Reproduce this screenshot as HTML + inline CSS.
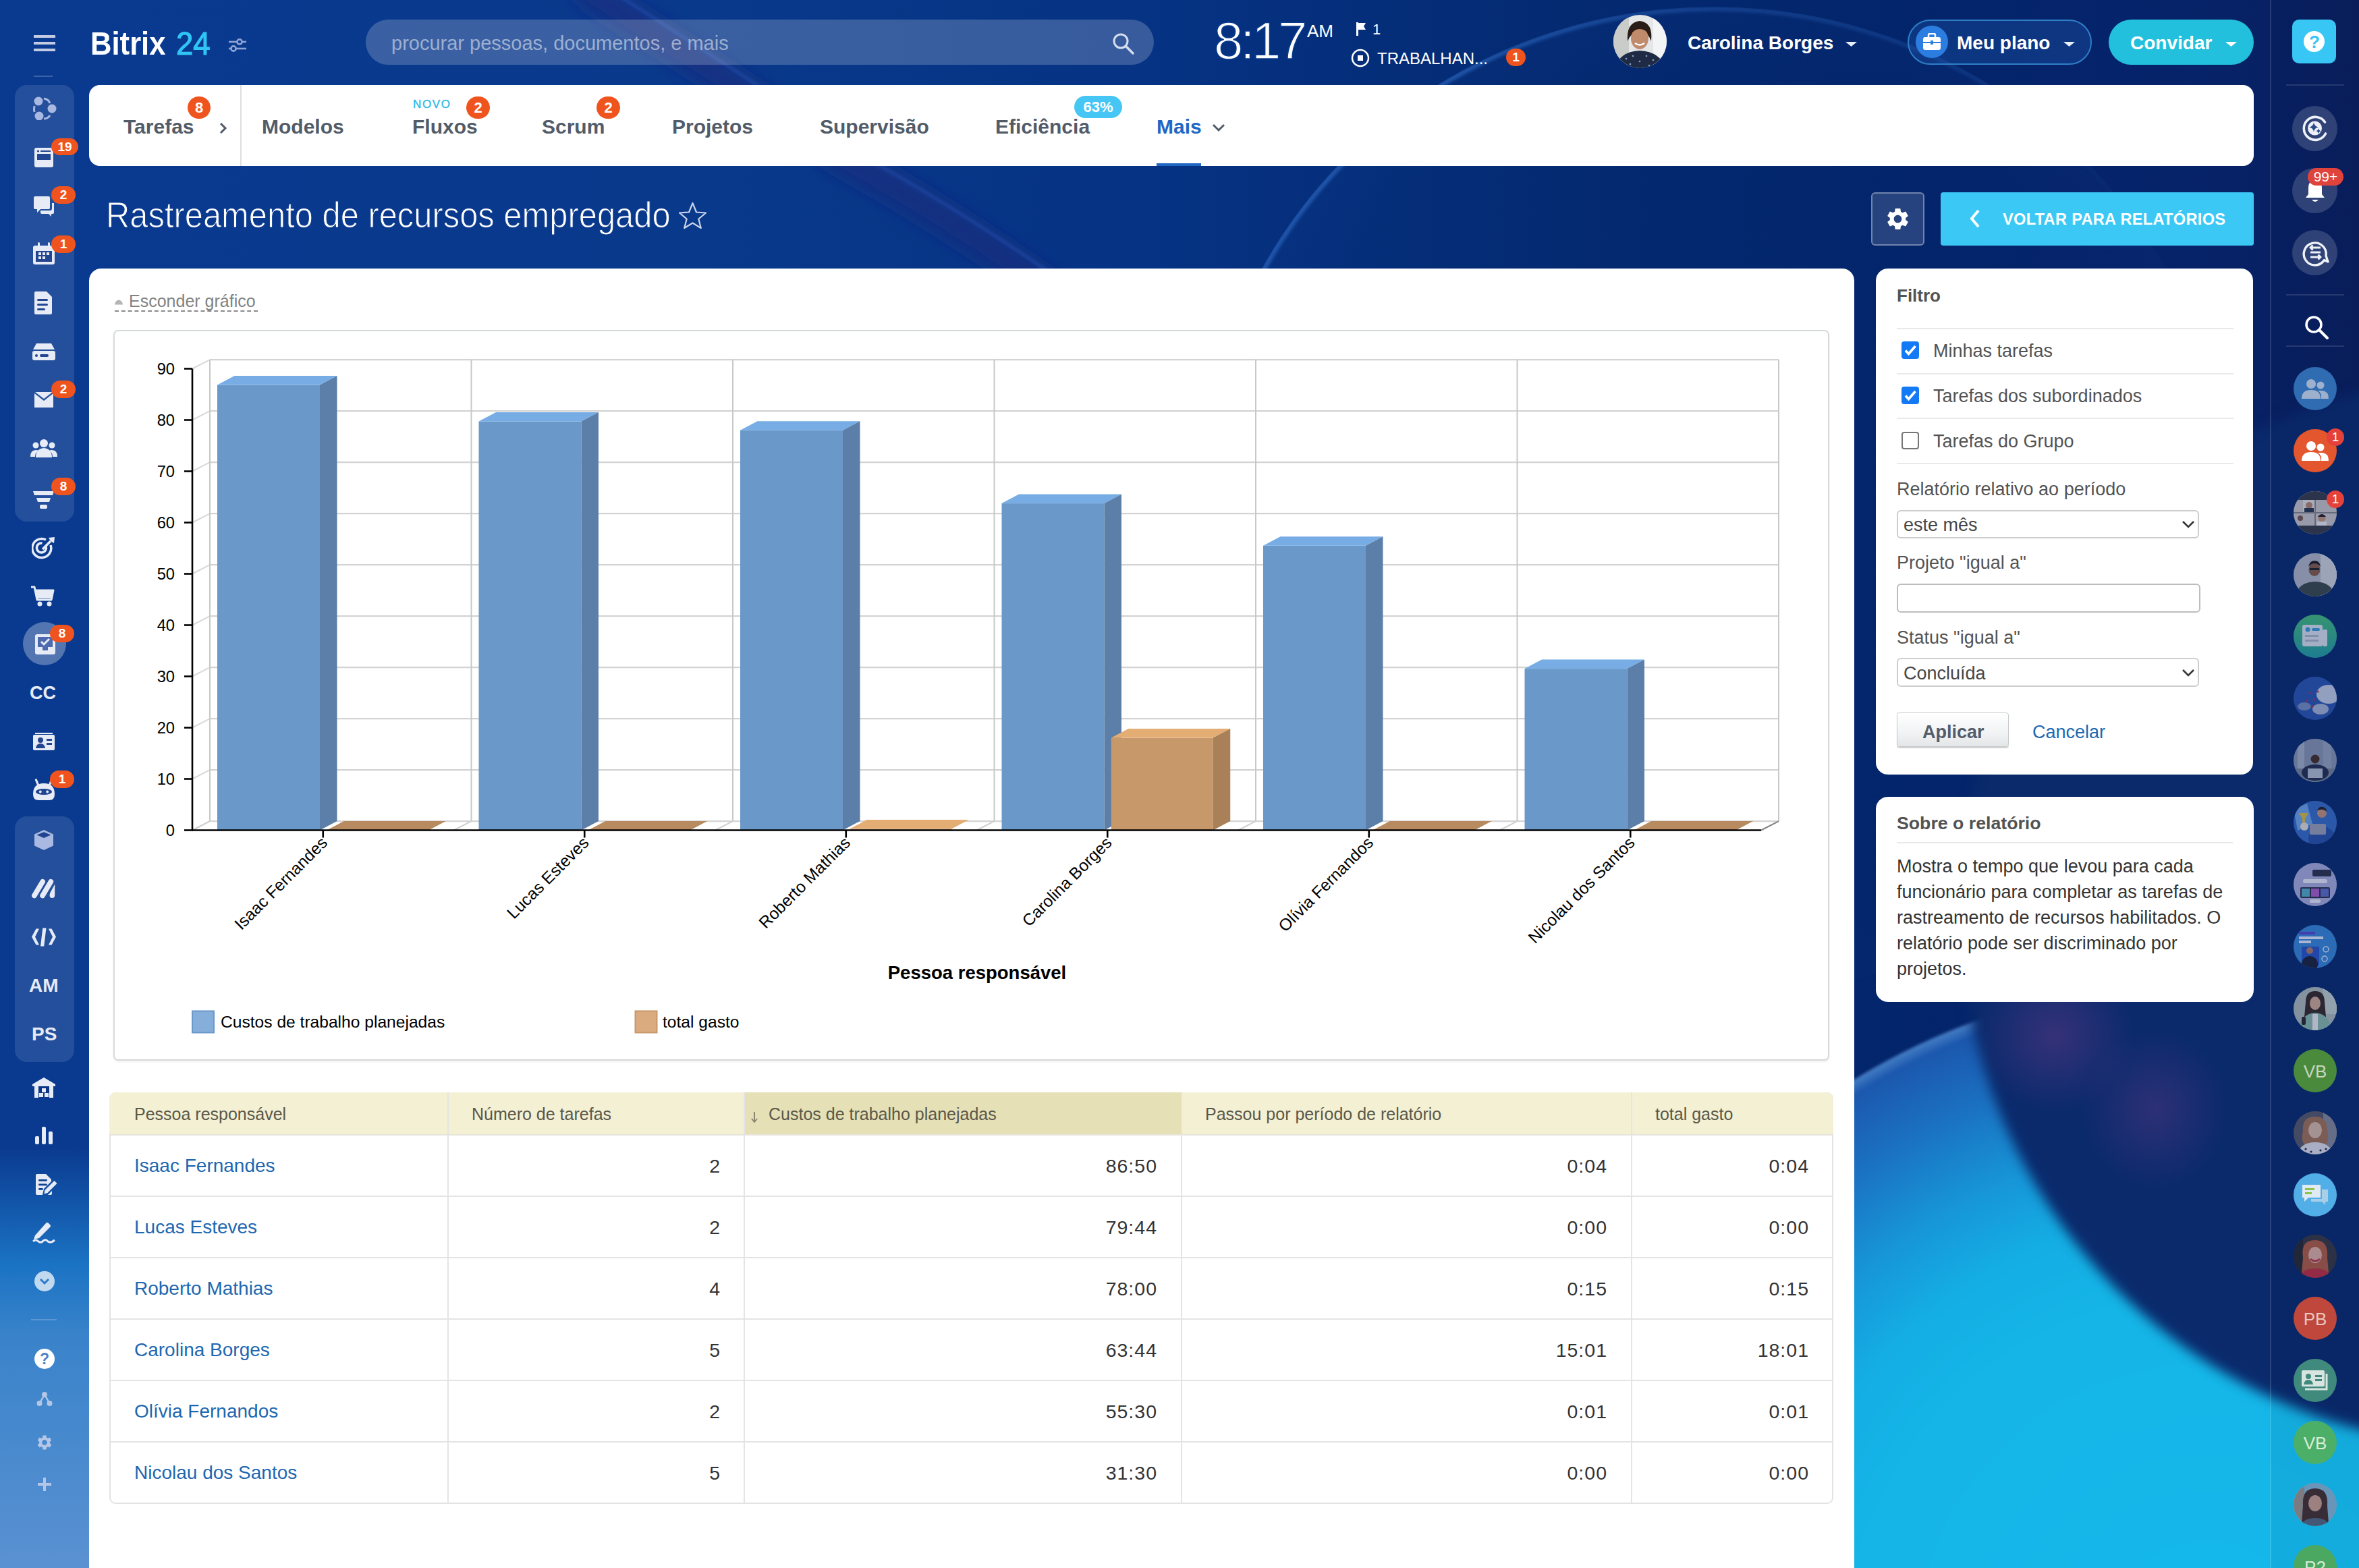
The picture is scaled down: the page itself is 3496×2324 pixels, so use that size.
<!DOCTYPE html>
<html><head><meta charset="utf-8">
<style>
html,body{margin:0;padding:0;width:3496px;height:2324px;overflow:hidden;}
body{position:relative;font-family:"Liberation Sans",sans-serif;background:#0a2d7e;}
.a{position:absolute;}
.bg{position:absolute;left:0;top:0;width:3496px;height:2324px;overflow:hidden;
 background:linear-gradient(90deg,#0a3a90 0%,#09398b 30%,#063384 48%,#042a72 66%,#03256b 80%,#06236a 92%,#0a1f5e 100%);}
.t{position:absolute;white-space:nowrap;line-height:1;}
.badge{position:absolute;background:#f0541e;color:#fff;font-weight:bold;border-radius:20px;text-align:center;}
.card{position:absolute;background:#fff;border-radius:18px;}
</style></head><body>
<div class="bg">
<svg class="a" style="left:0;top:0" width="3496" height="700" viewBox="0 0 3496 700"><defs><filter id="bl1" x="-20%" y="-20%" width="140%" height="140%"><feGaussianBlur stdDeviation="14"/></filter><filter id="bl2"><feGaussianBlur stdDeviation="2.5"/></filter></defs><path d="M860 -20 Q1050 100 1250 235 Q1420 330 1600 460" stroke="rgba(40,30,120,0.45)" stroke-width="44" fill="none" filter="url(#bl1)"/><path d="M895 -20 Q1085 100 1285 235 Q1455 330 1635 460" stroke="rgba(70,120,220,0.35)" stroke-width="4" fill="none" filter="url(#bl2)"/></svg>
<div class="a" style="left:1780px;top:10px;width:1520px;height:1470px;-webkit-mask-image:linear-gradient(90deg,#000 0%,#000 25%,rgba(0,0,0,0.55) 50%,rgba(0,0,0,0.35) 75%,transparent 92%)"><div class="a" style="left:0;top:0;width:1520px;height:1470px;border-radius:50%;box-sizing:border-box;border:6px solid rgba(70,140,235,0.5);filter:blur(2.5px);-webkit-mask-image:linear-gradient(180deg,#000 0%,#000 28%,transparent 42%)"></div></div>
<div class="a" style="left:1780px;top:10px;width:1520px;height:1470px;border-radius:50%;background:radial-gradient(ellipse at 50% 50%,rgba(30,70,150,0) 60%,rgba(40,90,180,0.18) 100%)"></div>
<div class="a" style="left:2270px;top:1453px;width:2000px;height:2000px;border-radius:50%;background:radial-gradient(circle closest-side,#16b9ec 0%,#15b5e7 53%,#14aee4 65%,#1796d8 76%,#1b6fc0 89%,#1b58ae 98%,rgba(100,165,235,0.7) 100%);filter:blur(2px)"></div>
<div class="a" style="left:2905px;top:555px;width:1590px;height:1590px;border-radius:50%;background:#0a2a6c;filter:blur(9px)"></div>
<div class="a" style="left:2925px;top:1420px;width:240px;height:230px;border-radius:50%;background:radial-gradient(ellipse at center,rgba(120,60,140,0.4),rgba(120,60,140,0) 70%)"></div>
<div class="a" style="left:3083px;top:1524px;width:220px;height:240px;border-radius:50%;background:radial-gradient(ellipse at center,rgba(120,60,140,0.32),rgba(120,60,140,0) 70%)"></div>
</div>

<!-- HEADER -->
<div id="header">
<div class="a" style="left:50px;top:52px;width:32px;height:4px;background:#c3cbe3"></div>
<div class="a" style="left:50px;top:62px;width:32px;height:4px;background:#c3cbe3"></div>
<div class="a" style="left:50px;top:72px;width:32px;height:4px;background:#c3cbe3"></div>
<div class="t" style="left:134px;top:39.5px;font-size:49px;font-weight:bold;color:#fff;transform:scaleX(0.89);transform-origin:0 0">Bitrix</div><div class="t" style="left:261px;top:39.5px;font-size:49px;color:#2fc6f6;transform:scaleX(0.93);transform-origin:0 0;-webkit-text-stroke:1.2px #2fc6f6">24</div>
<svg class="a" style="left:338px;top:54px" width="28" height="26" viewBox="0 0 28 26"><g stroke="#8ea3d3" stroke-width="2.6" fill="none"><line x1="1" y1="8" x2="27" y2="8"/><line x1="1" y1="18" x2="27" y2="18"/><circle cx="17" cy="8" r="3.6" fill="#0a3a90"/><circle cx="8" cy="18" r="3.6" fill="#0a3a90"/></g></svg>
<div class="a" style="left:542px;top:29px;width:1168px;height:67px;border-radius:34px;background:rgba(255,255,255,0.2)"></div>
<div class="t" style="left:580px;top:50px;font-size:29px;color:rgba(255,255,255,0.5)">procurar pessoas, documentos, e mais</div>
<svg class="a" style="left:1648px;top:48px" width="34" height="34" viewBox="0 0 34 34"><circle cx="13" cy="13" r="10" stroke="#d5deee" stroke-width="3" fill="none"/><line x1="20.5" y1="20.5" x2="31" y2="31" stroke="#d5deee" stroke-width="3.5" stroke-linecap="round"/></svg>
<div class="t" style="left:1799px;top:21px;font-size:78px;color:#fff;letter-spacing:-4.5px;-webkit-text-stroke:1.6px #083a8b">8:17</div>
<div class="t" style="left:1937px;top:33px;font-size:26px;color:#fff">AM</div>
<svg class="a" style="left:2008px;top:32px" width="22" height="22" viewBox="0 0 22 22"><rect x="2" y="1" width="3" height="20" fill="#fff"/><path d="M5 2 H16 L13 7 L16 12 H5 Z" fill="#fff"/></svg>
<div class="t" style="left:2034px;top:33px;font-size:22px;color:#fff">1</div>
<svg class="a" style="left:2001px;top:71px" width="30" height="30" viewBox="0 0 30 30"><circle cx="15" cy="15" r="12" stroke="#fff" stroke-width="2.5" fill="none"/><rect x="11" y="11" width="8" height="8" fill="#fff"/></svg>
<div class="t" style="left:2041px;top:75px;font-size:24px;color:#fff">TRABALHAN...</div>
<div class="badge" style="left:2232px;top:72px;width:29px;height:26px;line-height:26px;font-size:19px">1</div>
<svg class="a" style="left:2390px;top:21px" width="81" height="81" viewBox="0 0 81 81"><defs><clipPath id="avc"><circle cx="40.5" cy="40.5" r="39.5"/></clipPath></defs><g clip-path="url(#avc)"><rect width="81" height="81" fill="#e4e6e8"/><rect x="0" y="0" width="24" height="81" fill="#c9ccc8"/><rect x="60" y="0" width="21" height="81" fill="#f2f4f6"/><path d="M22 40 Q20 12 40 10 Q60 12 57 40 Q52 26 40 24 Q28 26 22 40Z" fill="#2a1c16"/><ellipse cx="40" cy="36" rx="13" ry="16" fill="#c08a6c"/><path d="M27 30 Q30 18 40 18 Q52 18 54 30 Q48 22 40 22 Q32 22 27 30Z" fill="#2a1c16"/><path d="M33 43 Q40 48 47 43" stroke="#fff" stroke-width="2.5" fill="none"/><path d="M4 81 Q8 56 40 54 Q72 56 78 81Z" fill="#1f2b45"/><g fill="#8aa0c8"><circle cx="20" cy="66" r="1.3"/><circle cx="30" cy="62" r="1.3"/><circle cx="50" cy="62" r="1.3"/><circle cx="60" cy="68" r="1.3"/><circle cx="26" cy="74" r="1.3"/><circle cx="40" cy="70" r="1.3"/><circle cx="54" cy="76" r="1.3"/></g></g></svg>
<div class="t" style="left:2501px;top:50px;font-size:28px;font-weight:bold;color:#fff">Carolina Borges</div>
<svg class="a" style="left:2734px;top:61px" width="19" height="9" viewBox="0 0 19 9"><path d="M1 1 H18 L9.5 8 Z" fill="#e8eef8"/></svg>
<div class="a" style="left:2827px;top:29px;width:269px;height:63px;border-radius:34px;border:2px solid #2f7fc7;background:rgba(40,100,190,0.28)"></div>
<div class="a" style="left:2839px;top:38px;width:48px;height:48px;border-radius:24px;background:#2b7de0"></div>
<svg class="a" style="left:2849px;top:49px" width="28" height="26" viewBox="0 0 28 26"><rect x="1" y="6" width="26" height="19" rx="3" fill="#fff"/><path d="M9 6 V3 Q9 1 11 1 H17 Q19 1 19 3 V6" stroke="#fff" stroke-width="2.5" fill="none"/><rect x="1" y="13" width="26" height="2" fill="#2b7de0"/><rect x="12" y="11" width="4" height="6" fill="#2b7de0"/></svg>
<div class="t" style="left:2900px;top:50px;font-size:28px;font-weight:bold;color:#fff">Meu plano</div>
<svg class="a" style="left:3057px;top:61px" width="19" height="9" viewBox="0 0 19 9"><path d="M1 1 H18 L9.5 8 Z" fill="#e8eef8"/></svg>
<div class="a" style="left:3125px;top:29px;width:215px;height:67px;border-radius:34px;background:#22c0dc"></div>
<div class="t" style="left:3157px;top:50px;font-size:28px;font-weight:bold;color:#fff">Convidar</div>
<svg class="a" style="left:3297px;top:61px" width="19" height="9" viewBox="0 0 19 9"><path d="M1 1 H18 L9.5 8 Z" fill="#fff"/></svg>
</div>

<!-- LEFT SIDEBAR -->
<div id="lsb">
<div class="a" style="left:0;top:1700px;width:132px;height:624px;background:linear-gradient(180deg,rgba(40,120,200,0) 0%,rgba(30,125,205,0.85) 28%,rgba(60,135,205,0.95) 45%,rgba(90,145,210,1) 100%)"></div>
<div class="a" style="left:50px;top:112px;width:28px;height:2px;background:rgba(255,255,255,0.2)"></div>
<div class="a" style="left:22px;top:126px;width:88px;height:647px;border-radius:18px;background:rgba(255,255,255,0.11)"></div>
<div class="a" style="left:22px;top:1210px;width:88px;height:364px;border-radius:18px;background:rgba(255,255,255,0.11)"></div>
<svg class="a" style="left:48px;top:142px" width="36" height="36" viewBox="0 0 36 36"><g fill="#aab9e2"><circle cx="9" cy="8" r="6.5"/><circle cx="29" cy="19" r="6.5"/><circle cx="10" cy="30" r="6.5"/><path d="M3 15 Q2 20 3 24" stroke="#aab9e2" stroke-width="3" fill="none"/><path d="M17 34 Q23 34 26 29" stroke="#aab9e2" stroke-width="3" fill="none"/><path d="M17 4 Q24 5 26 11" stroke="#aab9e2" stroke-width="3" fill="none"/></g></svg>
<svg class="a" style="left:50px;top:218px" width="30" height="30" viewBox="0 0 30 30"><rect x="1" y="1" width="28" height="29" rx="3" fill="#e6ebf6"/><rect x="5" y="10" width="20" height="9" fill="#24458f"/><circle cx="6.5" cy="6" r="1.6" fill="#24458f"/><rect x="10" y="5" width="15" height="2" fill="#24458f"/></svg>
<div class="badge" style="left:76px;top:205px;width:40px;height:25px;line-height:25px;font-size:19px;border-radius:13px">19</div>
<svg class="a" style="left:48px;top:290px" width="34" height="34" viewBox="0 0 34 34"><path d="M2 3 Q2 1 4 1 H24 Q26 1 26 3 V18 Q26 20 24 20 H12 L7 25 V20 H4 Q2 20 2 18 Z" fill="#e6ebf6"/><path d="M29 11 H32 V25 Q32 27 30 27 H28 V31 L24 27 H14 Q12 27 12 25 V22 H26 Q29 22 29 19 Z" fill="#e6ebf6"/></svg>
<div class="badge" style="left:76px;top:276px;width:36px;height:26px;line-height:26px;font-size:19px;border-radius:13px">2</div>
<svg class="a" style="left:48px;top:358px" width="34" height="36" viewBox="0 0 34 36"><rect x="1" y="6" width="32" height="28" rx="3" fill="#e6ebf6"/><rect x="5" y="14" width="24" height="16" fill="#24458f"/><rect x="8" y="1" width="3" height="8" rx="1.5" fill="#e6ebf6"/><rect x="23" y="1" width="3" height="8" rx="1.5" fill="#e6ebf6"/><g fill="#e6ebf6"><rect x="9" y="16" width="4" height="4"/><rect x="15" y="16" width="4" height="4"/><rect x="21" y="16" width="4" height="4"/><rect x="9" y="22" width="4" height="4"/><rect x="15" y="22" width="4" height="4"/></g></svg>
<div class="badge" style="left:76px;top:349px;width:36px;height:26px;line-height:26px;font-size:19px;border-radius:13px">1</div>
<svg class="a" style="left:50px;top:431px" width="28" height="36" viewBox="0 0 28 36"><path d="M1 3 Q1 1 3 1 H19 L27 9 V33 Q27 35 25 35 H3 Q1 35 1 33 Z" fill="#e6ebf6"/><rect x="5" y="12" width="16" height="3" rx="1.5" fill="#24458f"/><rect x="5" y="19" width="16" height="3" rx="1.5" fill="#24458f"/><rect x="5" y="26" width="12" height="3" rx="1.5" fill="#24458f"/></svg>
<svg class="a" style="left:47px;top:508px" width="36" height="27" viewBox="0 0 36 27"><path d="M7 1 H29 L34 10 H2 Z" fill="#e6ebf6"/><rect x="1" y="12" width="34" height="14" rx="3" fill="#e6ebf6"/><circle cx="7" cy="19" r="2" fill="#24458f"/><rect x="12" y="17" width="13" height="4" rx="2" fill="#24458f"/></svg>
<svg class="a" style="left:50px;top:580px" width="30" height="25" viewBox="0 0 30 25"><path d="M1 3 L15 14 L29 3 V24 H1 Z" fill="#e6ebf6"/><path d="M2 1 H28 L15 11 Z" fill="#e6ebf6"/></svg>
<div class="badge" style="left:76px;top:564px;width:36px;height:26px;line-height:26px;font-size:19px;border-radius:13px">2</div>
<svg class="a" style="left:45px;top:650px" width="40" height="29" viewBox="0 0 40 29"><g fill="#e6ebf6"><circle cx="20" cy="7" r="6"/><path d="M8 28 Q8 15 20 14 Q32 15 32 28 Z"/><circle cx="8" cy="10" r="4.5"/><path d="M0 27 Q0 17 8 17 Q11 17 12 18 Q7 21 7 27 Z"/><circle cx="32" cy="10" r="4.5"/><path d="M40 27 Q40 17 32 17 Q29 17 28 18 Q33 21 33 27 Z"/></g></svg>
<svg class="a" style="left:48px;top:727px" width="33" height="28" viewBox="0 0 33 28"><g fill="#e6ebf6"><path d="M1 1 H32 L30 7 H3 Z"/><path d="M6 11 H27 L25 17 H8 Z"/><rect x="11" y="21" width="11" height="6" rx="2"/></g></svg>
<div class="badge" style="left:76px;top:708px;width:36px;height:26px;line-height:26px;font-size:19px;border-radius:13px">8</div>
<svg class="a" style="left:47px;top:795px" width="35" height="35" viewBox="0 0 35 35"><g fill="none" stroke="#e6ebf6" stroke-width="3.5"><path d="M28 13 A14 14 0 1 1 21 5"/><path d="M21 14.5 A7 7 0 1 1 15.5 10"/></g><line x1="16" y1="19" x2="28" y2="7" stroke="#e6ebf6" stroke-width="3.5"/><path d="M25 2 L34 1 L33 10 L28 7 Z" fill="#e6ebf6"/></svg>
<svg class="a" style="left:45px;top:868px" width="36" height="32" viewBox="0 0 36 32"><path d="M1 2 H6 L10 21 H31 L34 7 H8" stroke="#e6ebf6" stroke-width="3" fill="none" stroke-linejoin="round"/><path d="M8 7 H34 L31 19 H10 Z" fill="#e6ebf6"/><circle cx="14" cy="27" r="3.5" fill="#e6ebf6"/><circle cx="28" cy="27" r="3.5" fill="#e6ebf6"/></svg>
<div class="a" style="left:34px;top:922px;width:64px;height:64px;border-radius:32px;background:rgba(255,255,255,0.3)"></div>
<svg class="a" style="left:51px;top:939px" width="32" height="32" viewBox="0 0 32 32"><rect x="1" y="1" width="30" height="30" rx="3" fill="#e6ebf6"/><path d="M5 5 H27 V20 H20 V25 H12 V20 H5 Z" fill="#4e69ad"/><path d="M10 12 L14 16 L22 8" stroke="#e6ebf6" stroke-width="3" fill="none"/></svg>
<div class="badge" style="left:74px;top:926px;width:36px;height:26px;line-height:26px;font-size:19px;border-radius:13px">8</div>
<div class="t" style="left:44px;top:1014px;font-size:27px;font-weight:bold;color:#e6ebf6">CC</div>
<svg class="a" style="left:48px;top:1085px" width="34" height="28" viewBox="0 0 34 28"><rect x="1" y="4" width="32" height="23" rx="2" fill="#e6ebf6"/><rect x="4" y="1" width="26" height="2" fill="#e6ebf6"/><circle cx="12" cy="12" r="4" fill="#24458f"/><path d="M5 24 Q6 17 12 17 Q18 17 19 24 Z" fill="#24458f"/><rect x="21" y="10" width="8" height="3" fill="#24458f"/><rect x="21" y="16" width="8" height="3" fill="#24458f"/></svg>
<svg class="a" style="left:47px;top:1154px" width="36" height="34" viewBox="0 0 36 34"><path d="M2 23 Q2 7 18 7 Q34 7 34 23 Q34 32 26 32 H10 Q2 32 2 23Z" fill="#e6ebf6"/><ellipse cx="18" cy="19.5" rx="12" ry="4.6" fill="#1f4491"/><circle cx="12.8" cy="19.5" r="1.9" fill="#e6ebf6"/><circle cx="23.2" cy="19.5" r="1.9" fill="#e6ebf6"/><line x1="6.5" y1="2" x2="9" y2="8" stroke="#e6ebf6" stroke-width="3.2" stroke-linecap="round"/><line x1="29.5" y1="2" x2="27" y2="8" stroke="#e6ebf6" stroke-width="3.2" stroke-linecap="round"/></svg>
<div class="badge" style="left:74px;top:1142px;width:36px;height:26px;line-height:26px;font-size:19px;border-radius:13px">1</div>
<svg class="a" style="left:50px;top:1229px" width="30" height="32" viewBox="0 0 30 32"><path d="M15 1 L29 7.5 V24.5 L15 31 L1 24.5 V7.5Z" fill="#aab9e2"/><path d="M15 4.2 L25.5 8.6 L15 13 L4.5 8.6Z" fill="#1f4491"/></svg>
<svg class="a" style="left:46px;top:1300px" width="38" height="34" viewBox="0 0 38 34"><g stroke="#e6ebf6" stroke-width="7.5" stroke-linecap="round"><line x1="4.8" y1="27.5" x2="17.2" y2="6.8"/><line x1="17" y1="27.5" x2="29.4" y2="6.8"/></g><path d="M35.2 10.5 V26.8 Q35.2 31 31.3 31 Q27.5 31 27.5 26.8 Q27.5 24.5 29 22 Z" fill="#e6ebf6"/></svg>
<svg class="a" style="left:45px;top:1374px" width="40" height="30" viewBox="0 0 40 30"><g fill="#e6ebf6"><path d="M8.5 2.5 H13 L7 14.5 L13 26.5 H8.5 L2 14.5Z"/><path d="M31.5 2.5 H27 L33 14.5 L27 26.5 H31.5 L38 14.5Z"/><path d="M18.3 1.5 H23.5 L20.2 28.5 H15Z"/></g></svg>
<div class="t" style="left:43px;top:1447px;font-size:28px;font-weight:bold;color:#e6ebf6">AM</div>
<div class="t" style="left:47px;top:1519px;font-size:28px;font-weight:bold;color:#e6ebf6">PS</div>
<svg class="a" style="left:47px;top:1596px" width="36" height="32" viewBox="0 0 36 32"><path d="M1 11 L18 1 L35 11 V14 H32 V31 H4 V14 H1 Z" fill="#e6ebf6"/><rect x="10" y="14" width="16" height="17" fill="#0c3589"/><rect x="15" y="17" width="6" height="6" fill="#e6ebf6"/><rect x="11" y="24" width="6" height="6" fill="#e6ebf6"/><rect x="19" y="24" width="6" height="6" fill="#e6ebf6"/></svg>
<svg class="a" style="left:51px;top:1669px" width="28" height="28" viewBox="0 0 28 28"><g fill="#e6ebf6"><rect x="1" y="15" width="6" height="12" rx="2"/><rect x="11" y="1" width="6" height="26" rx="2"/><rect x="21" y="8" width="6" height="19" rx="2"/></g></svg>
<svg class="a" style="left:52px;top:1739px" width="34" height="33" viewBox="0 0 34 33"><path d="M1 3 Q1 1 3 1 H16 L24 9 V12 L13 23 L11 32 H3 Q1 32 1 30Z" fill="#e6ebf6"/><path d="M19 32 L25 26 V30 Q25 32 23 32Z" fill="#e6ebf6"/><g fill="#12418f"><rect x="5" y="9" width="13" height="2.8" rx="1.4"/><rect x="5" y="15.5" width="13" height="2.8" rx="1.4"/><rect x="5" y="22" width="7" height="2.8" rx="1.4"/></g><path d="M13.5 30.5 L14.5 25 L28.5 11 L32.5 15 L18.5 29Z" fill="#e6ebf6"/></svg>
<svg class="a" style="left:48px;top:1810px" width="34" height="33" viewBox="0 0 34 33"><path d="M4 21 L20 3 Q22 1 24 3 L26 5 Q28 7 26 9 L10 25 L2 27 Z" fill="#e6ebf6"/><path d="M1 30 Q5 26 9 30 Q13 33 16 29 Q20 26 23 30 Q27 33 33 28" stroke="#e6ebf6" stroke-width="3" fill="none"/></svg>
<div class="a" style="left:51px;top:1884px;width:30px;height:30px;border-radius:15px;background:rgba(255,255,255,0.72)"></div>
<svg class="a" style="left:56px;top:1891px" width="20" height="16" viewBox="0 0 20 16"><path d="M4 5 L10 11 L16 5" stroke="#2f7ac9" stroke-width="3" fill="none"/></svg>
<div class="a" style="left:46px;top:1955px;width:38px;height:2px;background:rgba(255,255,255,0.2)"></div>
<div class="a" style="left:51px;top:1999px;width:30px;height:30px;border-radius:15px;background:#fff"></div>
<div class="t" style="left:59px;top:2003px;font-size:23px;font-weight:bold;color:#4d86c8">?</div>
<svg class="a" style="left:54px;top:2062px" width="24" height="24" viewBox="0 0 24 24"><g fill="#b3c6e6"><circle cx="12" cy="5" r="4"/><circle cx="4.5" cy="18" r="4"/><circle cx="19.5" cy="18" r="4"/></g><path d="M12 5 L4.5 18 M12 5 L19.5 18" stroke="#b3c6e6" stroke-width="2.5"/></svg>
<svg class="a" style="left:53px;top:2125px" width="26" height="26" viewBox="0 0 24 24"><path fill="#b3c6e6" d="M19.14 12.94c.04-.3.06-.61.06-.94 0-.32-.02-.64-.07-.94l2.03-1.58c.18-.14.23-.41.12-.61l-1.92-3.32c-.12-.22-.37-.29-.59-.22l-2.39.96c-.5-.38-1.030-.7-1.62-.94l-.36-2.54c-.04-.24-.24-.41-.48-.41h-3.84c-.24 0-.43.17-.47.41l-.36 2.54c-.59.24-1.13.57-1.62.94l-2.39-.96c-.22-.08-.47 0-.59.22L2.74 8.87c-.12.21-.08.47.12.61l2.03 1.58c-.05.3-.09.63-.09.94s.02.64.07.94l-2.030 1.58c-.18.14-.23.41-.12.61l1.92 3.32c.12.22.37.29.59.22l2.39-.96c.5.38 1.03.7 1.62.94l.36 2.54c.05.24.24.41.48.41h3.84c.24 0 .44-.17.47-.41l.36-2.54c.59-.24 1.13-.56 1.62-.94l2.39.96c.22.08.47 0 .59-.22l1.92-3.32c.12-.22.07-.47-.12-.61l-2.01-1.58zM12 15.6c-1.98 0-3.6-1.62-3.6-3.6s1.62-3.6 3.6-3.6 3.6 1.62 3.6 3.6-1.62 3.6-3.6 3.6z"/></svg>
<svg class="a" style="left:54px;top:2188px" width="24" height="24" viewBox="0 0 24 24"><path d="M12 2 V22 M2 12 H22" stroke="#b3c6e6" stroke-width="4"/></svg>
</div>

<!-- NAV BAR -->
<div id="nav">
<div class="card" style="left:132px;top:126px;width:3208px;height:120px;border-radius:16px"></div>
<div class="t" style="left:183px;top:173px;font-size:30px;font-weight:bold;color:#525c69">Tarefas</div>
<div class="badge" style="left:278px;top:143px;width:34px;height:33px;line-height:33px;font-size:22px">8</div>
<svg class="a" style="left:322px;top:180px" width="18" height="20" viewBox="0 0 18 20"><path d="M5 3 L12 10 L5 17" stroke="#525c69" stroke-width="3" fill="none"/></svg>
<div class="a" style="left:356px;top:126px;width:2px;height:120px;background:#dcdfe3"></div>
<div class="t" style="left:388px;top:173px;font-size:30px;font-weight:bold;color:#525c69">Modelos</div>
<div class="t" style="left:612px;top:146px;font-size:17px;color:#2fb8e8;letter-spacing:1.6px;-webkit-text-stroke:0.4px #2fb8e8">NOVO</div>
<div class="t" style="left:611px;top:173px;font-size:30px;font-weight:bold;color:#525c69">Fluxos</div>
<div class="badge" style="left:691px;top:143px;width:35px;height:33px;line-height:33px;font-size:22px">2</div>
<div class="t" style="left:803px;top:173px;font-size:30px;font-weight:bold;color:#525c69">Scrum</div>
<div class="badge" style="left:884px;top:143px;width:35px;height:33px;line-height:33px;font-size:22px">2</div>
<div class="t" style="left:996px;top:173px;font-size:30px;font-weight:bold;color:#525c69">Projetos</div>
<div class="t" style="left:1215px;top:173px;font-size:30px;font-weight:bold;color:#525c69">Supervisão</div>
<div class="t" style="left:1475px;top:173px;font-size:30px;font-weight:bold;color:#525c69">Eficiência</div>
<div class="badge" style="left:1592px;top:142px;width:71px;height:33px;line-height:33px;font-size:22px;background:#46c6f4">63%</div>
<div class="t" style="left:1714px;top:173px;font-size:30px;font-weight:bold;color:#2067c4">Mais</div>
<svg class="a" style="left:1795px;top:181px" width="22" height="16" viewBox="0 0 22 16"><path d="M3 4 L11 12 L19 4" stroke="#525c69" stroke-width="3" fill="none"/></svg>
<div class="a" style="left:1714px;top:242px;width:66px;height:4px;background:#2067c4"></div>
</div>

<!-- TITLE -->
<div id="title">
<div class="t" style="left:157px;top:292px;font-size:53px;color:#fff;transform:scaleX(0.922);transform-origin:0 0;-webkit-text-stroke:1.1px #0a398d">Rastreamento de recursos empregado</div>
<svg class="a" style="left:1004px;top:298px" width="45" height="42" viewBox="0 0 45 42"><path d="M22.5 3 L28 16.5 L42 17.5 L31.3 26.5 L34.8 40 L22.5 32.5 L10.2 40 L13.7 26.5 L3 17.5 L17 16.5 Z" stroke="#c9d3ea" stroke-width="2.2" fill="none" stroke-linejoin="round"/></svg>
<div class="a" style="left:2773px;top:285px;width:75px;height:75px;border:2px solid rgba(255,255,255,0.35);border-radius:6px;background:rgba(255,255,255,0.14)"></div>
<svg class="a" style="left:2793px;top:305px" width="39" height="39" viewBox="0 0 24 24"><path fill="#fff" d="M19.14 12.94c.04-.3.06-.61.06-.94 0-.32-.02-.64-.07-.94l2.03-1.58c.18-.14.23-.41.12-.61l-1.92-3.32c-.12-.22-.37-.29-.59-.22l-2.39.96c-.5-.38-1.03-.7-1.62-.94l-.36-2.54c-.04-.24-.24-.41-.48-.41h-3.84c-.24 0-.43.17-.47.41l-.36 2.54c-.59.24-1.13.57-1.62.94l-2.39-.96c-.22-.08-.47 0-.59.22L2.74 8.87c-.12.21-.08.47.12.61l2.03 1.58c-.05.3-.09.63-.09.94s.02.64.07.94l-2.03 1.58c-.18.14-.23.41-.12.61l1.92 3.32c.12.22.37.29.59.22l2.39-.96c.5.38 1.03.7 1.62.94l.36 2.54c.05.24.24.41.48.41h3.84c.24 0 .44-.17.47-.41l.36-2.54c.59-.24 1.13-.56 1.62-.94l2.39.96c.22.08.47 0 .59-.22l1.92-3.32c.12-.22.07-.47-.12-.61l-2.01-1.58zM12 15.6c-1.98 0-3.6-1.62-3.6-3.6s1.62-3.6 3.6-3.6 3.6 1.62 3.6 3.6-1.62 3.6-3.6 3.6z"/></svg>
<div class="a" style="left:2876px;top:285px;width:464px;height:79px;border-radius:4px;background:#3bc8f5"></div>
<svg class="a" style="left:2914px;top:306px" width="26" height="36" viewBox="0 0 26 36"><path d="M18 6 L8 18 L18 30" stroke="#fff" stroke-width="4" fill="none"/></svg>
<div class="t" style="left:2968px;top:314px;font-size:23.6px;font-weight:bold;color:#fff;letter-spacing:0.3px">VOLTAR PARA RELATÓRIOS</div>
</div>

<!-- MAIN CARD -->
<div id="main">
<div class="card" style="left:132px;top:398px;width:2616px;height:2000px"></div>
<svg class="a" style="left:168px;top:443px" width="16" height="10" viewBox="0 0 16 10"><path d="M2 8.5 Q3 2 8 1.5 Q13 2 14 8.5 Z" fill="#b5b5b5"/></svg>
<div class="t" style="left:191px;top:434px;font-size:25px;color:#828282">Esconder gráfico</div>
<div class="a" style="left:170px;top:460px;width:212px;height:0;border-top:2px dashed #8a8a8a"></div>
<div class="a" style="left:168px;top:489px;width:2539px;height:1079px;border:2px solid #d6d9db;border-radius:7px;box-shadow:0 2px 3px rgba(0,0,0,0.06)"></div>
<svg class="a" style="left:168px;top:489px;font-family:'Liberation Sans',sans-serif" width="2543" height="1083" viewBox="168 489 2543 1083"><line x1="311" y1="1217.2" x2="2636.0" y2="1217.2" stroke="#d3d3d3" stroke-width="2.2"/><line x1="285" y1="1230.5" x2="311" y2="1217.2" stroke="#d9d9d9" stroke-width="2"/><line x1="311" y1="1141.2" x2="2636.0" y2="1141.2" stroke="#d3d3d3" stroke-width="2.2"/><line x1="285" y1="1154.5" x2="311" y2="1141.2" stroke="#d9d9d9" stroke-width="2"/><line x1="311" y1="1065.2" x2="2636.0" y2="1065.2" stroke="#d3d3d3" stroke-width="2.2"/><line x1="285" y1="1078.5" x2="311" y2="1065.2" stroke="#d9d9d9" stroke-width="2"/><line x1="311" y1="989.2" x2="2636.0" y2="989.2" stroke="#d3d3d3" stroke-width="2.2"/><line x1="285" y1="1002.5" x2="311" y2="989.2" stroke="#d9d9d9" stroke-width="2"/><line x1="311" y1="913.2" x2="2636.0" y2="913.2" stroke="#d3d3d3" stroke-width="2.2"/><line x1="285" y1="926.5" x2="311" y2="913.2" stroke="#d9d9d9" stroke-width="2"/><line x1="311" y1="837.2" x2="2636.0" y2="837.2" stroke="#d3d3d3" stroke-width="2.2"/><line x1="285" y1="850.5" x2="311" y2="837.2" stroke="#d9d9d9" stroke-width="2"/><line x1="311" y1="761.2" x2="2636.0" y2="761.2" stroke="#d3d3d3" stroke-width="2.2"/><line x1="285" y1="774.5" x2="311" y2="761.2" stroke="#d9d9d9" stroke-width="2"/><line x1="311" y1="685.2" x2="2636.0" y2="685.2" stroke="#d3d3d3" stroke-width="2.2"/><line x1="285" y1="698.5" x2="311" y2="685.2" stroke="#d9d9d9" stroke-width="2"/><line x1="311" y1="609.2" x2="2636.0" y2="609.2" stroke="#d3d3d3" stroke-width="2.2"/><line x1="285" y1="622.5" x2="311" y2="609.2" stroke="#d9d9d9" stroke-width="2"/><line x1="311" y1="533.2" x2="2636.0" y2="533.2" stroke="#d3d3d3" stroke-width="2.2"/><line x1="285" y1="546.5" x2="311" y2="533.2" stroke="#d9d9d9" stroke-width="2"/><line x1="311.0" y1="533.2" x2="311.0" y2="1217.2" stroke="#c8c8c8" stroke-width="2"/><line x1="285.0" y1="1230.5" x2="311.0" y2="1217.2" stroke="#d0d0d0" stroke-width="2"/><line x1="698.5" y1="533.2" x2="698.5" y2="1217.2" stroke="#c8c8c8" stroke-width="2"/><line x1="672.5" y1="1230.5" x2="698.5" y2="1217.2" stroke="#d0d0d0" stroke-width="2"/><line x1="1086.0" y1="533.2" x2="1086.0" y2="1217.2" stroke="#c8c8c8" stroke-width="2"/><line x1="1060.0" y1="1230.5" x2="1086.0" y2="1217.2" stroke="#d0d0d0" stroke-width="2"/><line x1="1473.5" y1="533.2" x2="1473.5" y2="1217.2" stroke="#c8c8c8" stroke-width="2"/><line x1="1447.5" y1="1230.5" x2="1473.5" y2="1217.2" stroke="#d0d0d0" stroke-width="2"/><line x1="1861.0" y1="533.2" x2="1861.0" y2="1217.2" stroke="#c8c8c8" stroke-width="2"/><line x1="1835.0" y1="1230.5" x2="1861.0" y2="1217.2" stroke="#d0d0d0" stroke-width="2"/><line x1="2248.5" y1="533.2" x2="2248.5" y2="1217.2" stroke="#c8c8c8" stroke-width="2"/><line x1="2222.5" y1="1230.5" x2="2248.5" y2="1217.2" stroke="#d0d0d0" stroke-width="2"/><line x1="2636.0" y1="533.2" x2="2636.0" y2="1217.2" stroke="#c8c8c8" stroke-width="2"/><line x1="2610.0" y1="1230.5" x2="2636.0" y2="1217.2" stroke="#d0d0d0" stroke-width="2"/><rect x="322.0" y="570.6" width="152" height="659.9" fill="#6a99c9"/><path d="M322.0 570.6 L347.5 557.1 L499.5 557.1 L474.0 570.6 Z" fill="#77ade4"/><path d="M474.0 570.6 L499.5 557.1 L499.5 1217.0 L474.0 1230.5 Z" fill="#5b7fa9"/><path d="M484.25 1230.5 L509.75 1217.0 L660.75 1217.0 L635.25 1230.5 Z" fill="#b88a5f"/><rect x="709.5" y="624.5" width="152" height="606.0" fill="#6a99c9"/><path d="M709.5 624.5 L735.0 611.0 L887.0 611.0 L861.5 624.5 Z" fill="#77ade4"/><path d="M861.5 624.5 L887.0 611.0 L887.0 1217.0 L861.5 1230.5 Z" fill="#5b7fa9"/><path d="M871.75 1230.5 L897.25 1217.0 L1048.25 1217.0 L1022.75 1230.5 Z" fill="#b88a5f"/><rect x="1097.0" y="637.7" width="152" height="592.8" fill="#6a99c9"/><path d="M1097.0 637.7 L1122.5 624.2 L1274.5 624.2 L1249.0 637.7 Z" fill="#77ade4"/><path d="M1249.0 637.7 L1274.5 624.2 L1274.5 1217.0 L1249.0 1230.5 Z" fill="#5b7fa9"/><path d="M1259.25 1228.6 L1284.75 1215.1 L1435.75 1215.1 L1410.25 1228.6 Z" fill="#e3ad74"/><rect x="1259.25" y="1228.6" width="151" height="1.9" fill="#c6986a"/><rect x="1484.5" y="746.1" width="152" height="484.4" fill="#6a99c9"/><path d="M1484.5 746.1 L1510.0 732.6 L1662.0 732.6 L1636.5 746.1 Z" fill="#77ade4"/><path d="M1636.5 746.1 L1662.0 732.6 L1662.0 1217.0 L1636.5 1230.5 Z" fill="#5b7fa9"/><rect x="1646.75" y="1093.6" width="151" height="136.9" fill="#c6986a"/><path d="M1646.75 1093.6 L1672.25 1080.1 L1823.25 1080.1 L1797.75 1093.6 Z" fill="#e3ad74"/><path d="M1797.75 1093.6 L1823.25 1080.1 L1823.25 1217.0 L1797.75 1230.5 Z" fill="#a98058"/><rect x="1872.0" y="808.7" width="152" height="421.8" fill="#6a99c9"/><path d="M1872.0 808.7 L1897.5 795.2 L2049.5 795.2 L2024.0 808.7 Z" fill="#77ade4"/><path d="M2024.0 808.7 L2049.5 795.2 L2049.5 1217.0 L2024.0 1230.5 Z" fill="#5b7fa9"/><path d="M2034.25 1230.5 L2059.75 1217.0 L2210.75 1217.0 L2185.25 1230.5 Z" fill="#b88a5f"/><rect x="2259.5" y="991.1" width="152" height="239.4" fill="#6a99c9"/><path d="M2259.5 991.1 L2285.0 977.6 L2437.0 977.6 L2411.5 991.1 Z" fill="#77ade4"/><path d="M2411.5 991.1 L2437.0 977.6 L2437.0 1217.0 L2411.5 1230.5 Z" fill="#5b7fa9"/><path d="M2421.75 1230.5 L2447.25 1217.0 L2598.25 1217.0 L2572.75 1230.5 Z" fill="#b88a5f"/><line x1="285" y1="546.5" x2="285" y2="1231.7" stroke="#000" stroke-width="2.6"/><line x1="284" y1="1230.5" x2="2610" y2="1230.5" stroke="#000" stroke-width="2.6"/><line x1="2610" y1="1230.5" x2="2636" y2="1217.2" stroke="#888" stroke-width="2"/><line x1="273" y1="1230.5" x2="285" y2="1230.5" stroke="#000" stroke-width="2.6"/><text x="259" y="1238.5" text-anchor="end" font-size="23.7" fill="#000">0</text><line x1="273" y1="1154.5" x2="285" y2="1154.5" stroke="#000" stroke-width="2.6"/><text x="259" y="1162.5" text-anchor="end" font-size="23.7" fill="#000">10</text><line x1="273" y1="1078.5" x2="285" y2="1078.5" stroke="#000" stroke-width="2.6"/><text x="259" y="1086.5" text-anchor="end" font-size="23.7" fill="#000">20</text><line x1="273" y1="1002.5" x2="285" y2="1002.5" stroke="#000" stroke-width="2.6"/><text x="259" y="1010.5" text-anchor="end" font-size="23.7" fill="#000">30</text><line x1="273" y1="926.5" x2="285" y2="926.5" stroke="#000" stroke-width="2.6"/><text x="259" y="934.5" text-anchor="end" font-size="23.7" fill="#000">40</text><line x1="273" y1="850.5" x2="285" y2="850.5" stroke="#000" stroke-width="2.6"/><text x="259" y="858.5" text-anchor="end" font-size="23.7" fill="#000">50</text><line x1="273" y1="774.5" x2="285" y2="774.5" stroke="#000" stroke-width="2.6"/><text x="259" y="782.5" text-anchor="end" font-size="23.7" fill="#000">60</text><line x1="273" y1="698.5" x2="285" y2="698.5" stroke="#000" stroke-width="2.6"/><text x="259" y="706.5" text-anchor="end" font-size="23.7" fill="#000">70</text><line x1="273" y1="622.5" x2="285" y2="622.5" stroke="#000" stroke-width="2.6"/><text x="259" y="630.5" text-anchor="end" font-size="23.7" fill="#000">80</text><line x1="273" y1="546.5" x2="285" y2="546.5" stroke="#000" stroke-width="2.6"/><text x="259" y="554.5" text-anchor="end" font-size="23.7" fill="#000">90</text><line x1="478.75" y1="1230.5" x2="478.75" y2="1241.5" stroke="#000" stroke-width="2.6"/><text transform="translate(486.75 1250.5) rotate(-45)" text-anchor="end" font-size="24.5" fill="#000">Isaac Fernandes</text><line x1="866.25" y1="1230.5" x2="866.25" y2="1241.5" stroke="#000" stroke-width="2.6"/><text transform="translate(874.25 1250.5) rotate(-45)" text-anchor="end" font-size="24.5" fill="#000">Lucas Esteves</text><line x1="1253.75" y1="1230.5" x2="1253.75" y2="1241.5" stroke="#000" stroke-width="2.6"/><text transform="translate(1261.75 1250.5) rotate(-45)" text-anchor="end" font-size="24.5" fill="#000">Roberto Mathias</text><line x1="1641.25" y1="1230.5" x2="1641.25" y2="1241.5" stroke="#000" stroke-width="2.6"/><text transform="translate(1649.25 1250.5) rotate(-45)" text-anchor="end" font-size="24.5" fill="#000">Carolina Borges</text><line x1="2028.75" y1="1230.5" x2="2028.75" y2="1241.5" stroke="#000" stroke-width="2.6"/><text transform="translate(2036.75 1250.5) rotate(-45)" text-anchor="end" font-size="24.5" fill="#000">Olívia Fernandos</text><line x1="2416.25" y1="1230.5" x2="2416.25" y2="1241.5" stroke="#000" stroke-width="2.6"/><text transform="translate(2424.25 1250.5) rotate(-45)" text-anchor="end" font-size="24.5" fill="#000">Nicolau dos Santos</text><text x="1448" y="1450.7" text-anchor="middle" font-size="27.5" font-weight="bold" fill="#000">Pessoa responsável</text><rect x="285" y="1498.5" width="32" height="32" fill="#86aedb" stroke="#6a98c9" stroke-width="2"/><text x="327" y="1523.4" font-size="24.6" fill="#000">Custos de trabalho planejadas</text><rect x="941.5" y="1498.5" width="32" height="32" fill="#d9ab7e" stroke="#c8976a" stroke-width="2"/><text x="982" y="1523.4" font-size="24.6" fill="#000">total gasto</text></svg>
</div>

<div id="table">
<div class="a" style="left:162px;top:1619px;width:2555px;height:610px;border:2px solid #e3e3e3;border-radius:9px;box-sizing:border-box"></div>
<div class="a" style="left:162px;top:1619px;width:2555px;height:63px;background:#f4f0d4;border-radius:9px 9px 0 0"></div>
<div class="a" style="left:1103px;top:1619px;width:648px;height:63px;background:#e6e0b6"></div>
<div class="a" style="left:162px;top:1681px;width:2555px;height:2px;background:#e6e4da"></div>
<div class="a" style="left:663px;top:1619px;width:2px;height:609px;background:#e4e4e4"></div>
<div class="a" style="left:1102px;top:1619px;width:2px;height:609px;background:#e4e4e4"></div>
<div class="a" style="left:1750px;top:1619px;width:2px;height:609px;background:#e4e4e4"></div>
<div class="a" style="left:2417px;top:1619px;width:2px;height:609px;background:#e4e4e4"></div>
<div class="a" style="left:163px;top:1772px;width:2553px;height:2px;background:#e4e4e4"></div>
<div class="a" style="left:163px;top:1863px;width:2553px;height:2px;background:#e4e4e4"></div>
<div class="a" style="left:163px;top:1954px;width:2553px;height:2px;background:#e4e4e4"></div>
<div class="a" style="left:163px;top:2045px;width:2553px;height:2px;background:#e4e4e4"></div>
<div class="a" style="left:163px;top:2136px;width:2553px;height:2px;background:#e4e4e4"></div>
<div class="t" style="left:199px;top:1638.5px;font-size:25px;color:#5a5849">Pessoa responsável</div>
<div class="t" style="left:699px;top:1638.5px;font-size:25px;color:#5a5849">Número de tarefas</div>
<div class="t" style="left:1139px;top:1638.5px;font-size:25px;color:#5a5849">Custos de trabalho planejadas</div>
<div class="t" style="left:1786px;top:1638.5px;font-size:25px;color:#5a5849">Passou por período de relatório</div>
<div class="t" style="left:2453px;top:1638.5px;font-size:25px;color:#5a5849">total gasto</div>
<svg class="a" style="left:1112px;top:1647px" width="12" height="18" viewBox="0 0 12 18"><path d="M6 1 V15 M2 11 L6 16 L10 11" stroke="#8a8670" stroke-width="2" fill="none"/></svg>
<div class="t" style="left:199px;top:1714.3px;font-size:28px;color:#2067b0">Isaac Fernandes</div>
<div class="t" style="right:2428px;top:1714.3px;font-size:28.5px;color:#333;letter-spacing:1px;text-align:right">2</div>
<div class="t" style="right:1781px;top:1714.3px;font-size:28.5px;color:#333;letter-spacing:1px;text-align:right">86:50</div>
<div class="t" style="right:1114px;top:1714.3px;font-size:28.5px;color:#333;letter-spacing:1px;text-align:right">0:04</div>
<div class="t" style="right:815px;top:1714.3px;font-size:28.5px;color:#333;letter-spacing:1px;text-align:right">0:04</div>
<div class="t" style="left:199px;top:1805.3px;font-size:28px;color:#2067b0">Lucas Esteves</div>
<div class="t" style="right:2428px;top:1805.3px;font-size:28.5px;color:#333;letter-spacing:1px;text-align:right">2</div>
<div class="t" style="right:1781px;top:1805.3px;font-size:28.5px;color:#333;letter-spacing:1px;text-align:right">79:44</div>
<div class="t" style="right:1114px;top:1805.3px;font-size:28.5px;color:#333;letter-spacing:1px;text-align:right">0:00</div>
<div class="t" style="right:815px;top:1805.3px;font-size:28.5px;color:#333;letter-spacing:1px;text-align:right">0:00</div>
<div class="t" style="left:199px;top:1896.3px;font-size:28px;color:#2067b0">Roberto Mathias</div>
<div class="t" style="right:2428px;top:1896.3px;font-size:28.5px;color:#333;letter-spacing:1px;text-align:right">4</div>
<div class="t" style="right:1781px;top:1896.3px;font-size:28.5px;color:#333;letter-spacing:1px;text-align:right">78:00</div>
<div class="t" style="right:1114px;top:1896.3px;font-size:28.5px;color:#333;letter-spacing:1px;text-align:right">0:15</div>
<div class="t" style="right:815px;top:1896.3px;font-size:28.5px;color:#333;letter-spacing:1px;text-align:right">0:15</div>
<div class="t" style="left:199px;top:1987.3px;font-size:28px;color:#2067b0">Carolina Borges</div>
<div class="t" style="right:2428px;top:1987.3px;font-size:28.5px;color:#333;letter-spacing:1px;text-align:right">5</div>
<div class="t" style="right:1781px;top:1987.3px;font-size:28.5px;color:#333;letter-spacing:1px;text-align:right">63:44</div>
<div class="t" style="right:1114px;top:1987.3px;font-size:28.5px;color:#333;letter-spacing:1px;text-align:right">15:01</div>
<div class="t" style="right:815px;top:1987.3px;font-size:28.5px;color:#333;letter-spacing:1px;text-align:right">18:01</div>
<div class="t" style="left:199px;top:2078.3px;font-size:28px;color:#2067b0">Olívia Fernandos</div>
<div class="t" style="right:2428px;top:2078.3px;font-size:28.5px;color:#333;letter-spacing:1px;text-align:right">2</div>
<div class="t" style="right:1781px;top:2078.3px;font-size:28.5px;color:#333;letter-spacing:1px;text-align:right">55:30</div>
<div class="t" style="right:1114px;top:2078.3px;font-size:28.5px;color:#333;letter-spacing:1px;text-align:right">0:01</div>
<div class="t" style="right:815px;top:2078.3px;font-size:28.5px;color:#333;letter-spacing:1px;text-align:right">0:01</div>
<div class="t" style="left:199px;top:2169.3px;font-size:28px;color:#2067b0">Nicolau dos Santos</div>
<div class="t" style="right:2428px;top:2169.3px;font-size:28.5px;color:#333;letter-spacing:1px;text-align:right">5</div>
<div class="t" style="right:1781px;top:2169.3px;font-size:28.5px;color:#333;letter-spacing:1px;text-align:right">31:30</div>
<div class="t" style="right:1114px;top:2169.3px;font-size:28.5px;color:#333;letter-spacing:1px;text-align:right">0:00</div>
<div class="t" style="right:815px;top:2169.3px;font-size:28.5px;color:#333;letter-spacing:1px;text-align:right">0:00</div>
</div>
<!-- RIGHT PANELS -->
<div id="side">
<div class="card" style="left:2780px;top:398px;width:559px;height:750px"></div>
<div class="t" style="left:2811px;top:425px;font-size:26px;font-weight:bold;color:#535353">Filtro</div>
<div class="a" style="left:2811px;top:486px;width:499px;height:2px;background:#e9e9e9"></div>
<div class="a" style="left:2811px;top:553px;width:499px;height:2px;background:#e9e9e9"></div>
<div class="a" style="left:2811px;top:619px;width:499px;height:2px;background:#e9e9e9"></div>
<div class="a" style="left:2811px;top:686px;width:499px;height:2px;background:#e9e9e9"></div>
<div class="a" style="left:2818px;top:506px;width:26px;height:26px;border-radius:4px;background:#1479f5"></div>
<svg class="a" style="left:2818px;top:506px" width="26" height="26" viewBox="0 0 26 26"><path d="M6 13.5 L10.5 18.5 L20.5 7" stroke="#fff" stroke-width="3.6" fill="none"/></svg>
<div class="t" style="left:2865px;top:506.5px;font-size:27px;color:#535353">Minhas tarefas</div>
<div class="a" style="left:2818px;top:573px;width:26px;height:26px;border-radius:4px;background:#1479f5"></div>
<svg class="a" style="left:2818px;top:573px" width="26" height="26" viewBox="0 0 26 26"><path d="M6 13.5 L10.5 18.5 L20.5 7" stroke="#fff" stroke-width="3.6" fill="none"/></svg>
<div class="t" style="left:2865px;top:573.5px;font-size:27px;color:#535353">Tarefas dos subordinados</div>
<div class="a" style="left:2818px;top:640px;width:26px;height:26px;border-radius:4px;border:2px solid #767676;box-sizing:border-box;background:#fff"></div>
<div class="t" style="left:2865px;top:640.5px;font-size:27px;color:#535353">Tarefas do Grupo</div>
<div class="t" style="left:2811px;top:712px;font-size:27px;color:#535353">Relatório relativo ao período</div>
<div class="a" style="left:2811px;top:756px;width:448px;height:42px;border:2px solid #cdcdcd;border-radius:6px;box-sizing:border-box;background:#fff"></div>
<div class="t" style="left:2821px;top:765px;font-size:27px;color:#474747">este mês</div>
<svg class="a" style="left:3232px;top:768px" width="22" height="18" viewBox="0 0 22 18"><path d="M3 5 L11 13 L19 5" stroke="#333" stroke-width="2.5" fill="none"/></svg>
<div class="t" style="left:2811px;top:821px;font-size:27px;color:#535353">Projeto "igual a"</div>
<div class="a" style="left:2811px;top:865px;width:450px;height:43px;border:2px solid #bdbdbd;border-radius:6px;box-sizing:border-box;background:#fff"></div>
<div class="t" style="left:2811px;top:932px;font-size:27px;color:#535353">Status "igual a"</div>
<div class="a" style="left:2811px;top:975px;width:448px;height:43px;border:2px solid #cdcdcd;border-radius:6px;box-sizing:border-box;background:#fff"></div>
<div class="t" style="left:2821px;top:985px;font-size:27px;color:#474747">Concluída</div>
<svg class="a" style="left:3232px;top:988px" width="22" height="18" viewBox="0 0 22 18"><path d="M3 5 L11 13 L19 5" stroke="#333" stroke-width="2.5" fill="none"/></svg>
<div class="a" style="left:2811px;top:1056px;width:166px;height:51px;border:1px solid #c6cacd;border-radius:4px;box-sizing:border-box;background:linear-gradient(180deg,#fff 0%,#f1f3f4 60%,#e3e6e7 100%);box-shadow:0 2px 1px rgba(0,0,0,0.18)"></div>
<div class="t" style="left:2849px;top:1072px;font-size:27px;font-weight:bold;color:#535c69">Aplicar</div>
<div class="t" style="left:3012px;top:1072px;font-size:27px;color:#2067b0">Cancelar</div>
<div class="card" style="left:2780px;top:1181px;width:560px;height:304px"></div>
<div class="t" style="left:2811px;top:1207px;font-size:26.7px;font-weight:bold;color:#535353">Sobre o relatório</div>
<div class="a" style="left:2811px;top:1248px;width:498px;height:2px;background:#e9e9e9"></div>
<div class="a" style="left:2811px;top:1265px;font-size:27px;line-height:38px;color:#333;white-space:nowrap">Mostra o tempo que levou para cada<br>funcionário para completar as tarefas de<br>rastreamento de recursos habilitados. O<br>relatório pode ser discriminado por<br>projetos.</div>
</div>

<!-- RIGHT SIDEBAR -->
<div id="rsb">
<div class="a" style="left:3365px;top:0;width:131px;height:2324px;background:rgba(0,5,40,0.06)"></div>
<div class="a" style="left:3364px;top:0;width:2px;height:2324px;background:rgba(255,255,255,0.13)"></div>
<div class="a" style="left:3397px;top:29px;width:65px;height:65px;border-radius:10px;background:#38c6f4"></div>
<div class="a" style="left:3414px;top:46px;width:31px;height:31px;border-radius:16px;background:#fff"></div>
<div class="t" style="left:3422px;top:49px;font-size:26px;font-weight:bold;color:#38c6f4">?</div>
<div class="a" style="left:3388px;top:125px;width:86px;height:2px;background:rgba(255,255,255,0.12)"></div>
<div class="a" style="left:3388px;top:436px;width:86px;height:2px;background:rgba(255,255,255,0.12)"></div>
<div class="a" style="left:3388px;top:512px;width:86px;height:2px;background:rgba(255,255,255,0.12)"></div>
<div class="a" style="left:3397px;top:157px;width:67px;height:67px;border-radius:50%;background:rgba(255,255,255,0.16)"></div>
<div class="a" style="left:3397px;top:249px;width:67px;height:67px;border-radius:50%;background:rgba(255,255,255,0.16)"></div>
<div class="a" style="left:3397px;top:341px;width:67px;height:67px;border-radius:50%;background:rgba(255,255,255,0.16)"></div>
<svg class="a" style="left:3408px;top:167px" width="46" height="46" viewBox="0 0 46 46"><path d="M37.5 14 A17 17 0 1 0 38.5 31" stroke="#eef1f8" stroke-width="3.6" fill="none" stroke-linecap="round"/><circle cx="22.5" cy="23" r="10.5" fill="#eef1f8"/><path d="M21 14.5 Q22 20.5 28 21.5 Q22 22.5 21 28.5 Q20 22.5 14 21.5 Q20 20.5 21 14.5Z" fill="#2c4a8a"/><path d="M28 23.5 Q28.6 26.6 31.5 27.2 Q28.6 27.8 28 30.9 Q27.4 27.8 24.5 27.2 Q27.4 26.6 28 23.5Z" fill="#2c4a8a"/></svg>
<svg class="a" style="left:3414px;top:264px" width="34" height="38" viewBox="0 0 34 38"><path d="M17 3 Q27 3 27 15 V24 L31 29 H3 L7 24 V15 Q7 3 17 3Z" fill="#fff"/><path d="M12 32 Q17 38 22 32Z" fill="#fff"/></svg>
<div class="badge" style="left:3420px;top:249px;width:53px;height:26px;line-height:26px;font-size:21px;font-weight:normal;background:#e0433c;border-radius:13px">99+</div>
<svg class="a" style="left:3410px;top:353px" width="42" height="42" viewBox="0 0 42 42"><path d="M34.5 32.5 A16.5 16.5 0 1 1 37 26 L40 35 Z" stroke="#eef1f8" stroke-width="3.4" fill="none" stroke-linejoin="round"/><path d="M14 14 H29 M17.5 10.5 L14 14 L17.5 17.5 M14 21 H29 M14 28 H29 M25.5 24.5 L29 28 L25.5 31.5" stroke="#eef1f8" stroke-width="2.8" fill="none"/></svg>
<svg class="a" style="left:3414px;top:466px" width="38" height="38" viewBox="0 0 38 38"><circle cx="15" cy="15" r="11" stroke="#fff" stroke-width="3.5" fill="none"/><line x1="23" y1="23" x2="35" y2="35" stroke="#fff" stroke-width="4" stroke-linecap="round"/></svg>
<div class="a" style="left:3399px;top:543.8px;width:64px;height:64px;border-radius:50%;background:#2f6cb2"></div>
<svg class="a" style="left:3409px;top:559.8px" width="44" height="32" viewBox="0 0 44 32"><g fill="#9fb0cc"><circle cx="16" cy="9" r="7"/><path d="M2 31 Q2 18 16 18 Q30 18 30 31Z"/><circle cx="30" cy="11" r="5.5"/><path d="M31 31 Q32 22 26 19 Q30 19 33 19 Q42 20 42 31Z"/></g></svg>
<div class="a" style="left:3399px;top:635.7px;width:64px;height:64px;border-radius:50%;background:#e4562e"></div>
<svg class="a" style="left:3409px;top:651.7px" width="44" height="32" viewBox="0 0 44 32"><g fill="#ffffff"><circle cx="16" cy="9" r="7"/><path d="M2 31 Q2 18 16 18 Q30 18 30 31Z"/><circle cx="30" cy="11" r="5.5"/><path d="M31 31 Q32 22 26 19 Q30 19 33 19 Q42 20 42 31Z"/></g></svg>
<svg class="a" style="left:3399px;top:727.6px" width="64" height="64" viewBox="0 0 64 64"><defs><clipPath id="cl2"><circle cx="32" cy="32" r="32"/></clipPath></defs><g clip-path="url(#cl2)"><rect width="64" height="64" fill="#cfcbc6"/><rect width="64" height="13" fill="#3a3e46"/><rect y="51" width="64" height="13" fill="#3a3e46"/><rect x="31" y="13" width="2" height="38" fill="#888"/><rect y="31" width="64" height="2" fill="#888"/><rect x="14" y="13" width="17" height="18" fill="#e8e4de"/><circle cx="23" cy="21" r="5" fill="#b88a6a"/><rect x="16" y="25" width="14" height="6" fill="#2c3a4c"/><circle cx="42" cy="40" r="5.5" fill="#c89a7a"/><path d="M36 38 Q42 30 48 38Z" fill="#2a2020"/><rect x="35" y="45" width="14" height="6" fill="#f0f0f0"/><circle cx="10" cy="40" r="4" fill="#7a5a48"/><rect width="64" height="64" fill="rgba(10,30,95,0.28)"/></g></svg>
<svg class="a" style="left:3399px;top:819.5px" width="64" height="64" viewBox="0 0 64 64"><defs><clipPath id="cl3"><circle cx="32" cy="32" r="32"/></clipPath></defs><g clip-path="url(#cl3)"><rect width="64" height="64" fill="#b6bcc4"/><rect x="40" width="24" height="64" fill="#d4d8dc"/><ellipse cx="32" cy="62" rx="28" ry="20" fill="#3e4c46"/><ellipse cx="31" cy="24" rx="8.5" ry="10" fill="#8a5e44"/><path d="M22 20 Q24 11 31 11 Q39 11 40 20 Q36 15 31 15 Q26 15 22 20Z" fill="#1c1c1c"/><rect x="24" y="22" width="14" height="3" fill="#222"/><rect width="64" height="64" fill="rgba(10,30,95,0.28)"/></g></svg>
<svg class="a" style="left:3399px;top:911.4px" width="64" height="64" viewBox="0 0 64 64"><defs><clipPath id="cl4"><circle cx="32" cy="32" r="32"/></clipPath></defs><g clip-path="url(#cl4)"><defs><linearGradient id="g5" x1="0" y1="0" x2="0" y2="1"><stop offset="0" stop-color="#48c27a"/><stop offset="1" stop-color="#25a2a3"/></linearGradient></defs><rect width="64" height="64" fill="url(#g5)"/><rect x="13" y="15" width="30" height="32" rx="3" fill="#dfe6ee"/><rect x="43" y="22" width="7" height="25" rx="2" fill="#dfe6ee"/><circle cx="21" cy="22" r="3.5" fill="#3aa0d8"/><rect x="27" y="20" width="12" height="4" rx="2" fill="#3aa0d8"/><rect x="17" y="30" width="20" height="3" fill="#b0bcc6"/><rect x="17" y="37" width="20" height="3" fill="#b0bcc6"/><rect width="64" height="64" fill="rgba(10,30,95,0.28)"/></g></svg>
<svg class="a" style="left:3399px;top:1003.3px" width="64" height="64" viewBox="0 0 64 64"><defs><clipPath id="cl5"><circle cx="32" cy="32" r="32"/></clipPath></defs><g clip-path="url(#cl5)"><rect width="64" height="64" fill="#2c58b0"/><ellipse cx="52" cy="26" rx="18" ry="14" fill="#c6d2e4"/><ellipse cx="40" cy="48" rx="12" ry="8" fill="#a8b8d4"/><ellipse cx="16" cy="44" rx="10" ry="6" fill="#7890c0"/><g fill="#c03040"><circle cx="24" cy="24" r="1.6"/><circle cx="30" cy="34" r="1.6"/><circle cx="20" cy="36" r="1.6"/><circle cx="36" cy="22" r="1.6"/><circle cx="28" cy="44" r="1.6"/></g><rect width="64" height="64" fill="rgba(10,30,95,0.28)"/></g></svg>
<svg class="a" style="left:3399px;top:1095.2px" width="64" height="64" viewBox="0 0 64 64"><defs><clipPath id="cl6"><circle cx="32" cy="32" r="32"/></clipPath></defs><g clip-path="url(#cl6)"><rect width="64" height="64" fill="#8c9ab0"/><rect x="6" y="4" width="10" height="40" fill="#a8b4c4"/><rect x="44" y="2" width="12" height="42" fill="#9aa8bc"/><rect y="44" width="64" height="20" fill="#7a8798"/><ellipse cx="32" cy="50" rx="20" ry="12" fill="#26304a"/><circle cx="32" cy="30" r="6.5" fill="#4a3020"/><rect x="21" y="44" width="22" height="14" fill="#b8c2d0"/><rect width="64" height="64" fill="rgba(10,30,95,0.28)"/></g></svg>
<svg class="a" style="left:3399px;top:1187.1px" width="64" height="64" viewBox="0 0 64 64"><defs><clipPath id="cl7"><circle cx="32" cy="32" r="32"/></clipPath></defs><g clip-path="url(#cl7)"><rect width="64" height="64" fill="#3a6fc6"/><path d="M0 12 L20 4 L28 34 L6 44Z" fill="#6fa8e8"/><path d="M8 18 H22 L17 26 V32 H13 V26Z" fill="#e2c23e"/><circle cx="16" cy="38" r="6" fill="#e8e4d8"/><ellipse cx="42" cy="56" rx="20" ry="18" fill="#2a54a8"/><circle cx="42" cy="18" r="7" fill="#c8967a"/><path d="M35 14 Q38 8 43 9 Q49 10 49 16 Q45 12 40 13Z" fill="#222"/><rect x="24" y="34" width="24" height="16" rx="2" fill="#9ea6b6"/><rect width="64" height="64" fill="rgba(10,30,95,0.28)"/></g></svg>
<svg class="a" style="left:3399px;top:1279.0px" width="64" height="64" viewBox="0 0 64 64"><defs><clipPath id="cl8"><circle cx="32" cy="32" r="32"/></clipPath></defs><g clip-path="url(#cl8)"><rect width="64" height="64" fill="#aeb2de"/><rect x="28" y="10" width="28" height="10" rx="2" fill="#30344a"/><rect x="14" y="24" width="36" height="6" rx="3" fill="#f0f0fa"/><rect x="10" y="36" width="44" height="16" rx="2" fill="#30344a"/><rect x="12" y="38" width="12" height="12" fill="#58b0c8"/><rect x="26" y="38" width="12" height="12" fill="#b060c8"/><rect x="40" y="38" width="12" height="12" fill="#6070c8"/><rect x="24" y="54" width="16" height="5" rx="2" fill="#f0f0fa"/><rect width="64" height="64" fill="rgba(10,30,95,0.28)"/></g></svg>
<svg class="a" style="left:3399px;top:1370.9px" width="64" height="64" viewBox="0 0 64 64"><defs><clipPath id="cl9"><circle cx="32" cy="32" r="32"/></clipPath></defs><g clip-path="url(#cl9)"><rect width="64" height="64" fill="#3a8ad8"/><rect x="8" y="10" width="24" height="4" fill="#5a4ad0"/><rect x="8" y="17" width="36" height="4" fill="#e8f0ff"/><rect x="8" y="23" width="18" height="4" fill="#e8f0ff"/><rect x="12" y="32" width="26" height="28" fill="#2a58c8"/><circle cx="24" cy="38" r="5" fill="#b08068"/><ellipse cx="24" cy="58" rx="12" ry="12" fill="#1c2438"/><circle cx="48" cy="36" r="4" fill="none" stroke="#e0ecff" stroke-width="1.5"/><circle cx="46" cy="50" r="4" fill="none" stroke="#e0ecff" stroke-width="1.5"/><rect width="64" height="64" fill="rgba(10,30,95,0.28)"/></g></svg>
<svg class="a" style="left:3399px;top:1462.8px" width="64" height="64" viewBox="0 0 64 64"><defs><clipPath id="cl10"><circle cx="32" cy="32" r="32"/></clipPath></defs><g clip-path="url(#cl10)"><rect width="64" height="64" fill="#b2c0b8"/><rect x="44" y="0" width="20" height="40" fill="#c8d4cc"/><path d="M18 22 Q18 6 32 6 Q46 6 46 22 L48 44 H16Z" fill="#3a2a22"/><ellipse cx="32" cy="24" rx="8" ry="10" fill="#d6ae94"/><path d="M8 64 Q10 40 32 38 Q54 40 56 64Z" fill="#8ebeaa"/><rect x="28" y="40" width="8" height="24" fill="#f0f0f0"/><rect x="12" y="44" width="6" height="12" rx="2" fill="#2a2a2a"/><rect width="64" height="64" fill="rgba(10,30,95,0.28)"/></g></svg>
<div class="a" style="left:3399px;top:1554.7px;width:64px;height:64px;border-radius:50%;background:#4a8a3c"></div>
<div class="t" style="left:3399px;top:1574.7px;width:64px;text-align:center;font-size:26px;color:#c7d6bf">VB</div>
<svg class="a" style="left:3399px;top:1646.6px" width="64" height="64" viewBox="0 0 64 64"><defs><clipPath id="cl12"><circle cx="32" cy="32" r="32"/></clipPath></defs><g clip-path="url(#cl12)"><rect width="64" height="64" fill="#5a5c66"/><rect x="44" width="20" height="64" fill="#8a8c96"/><path d="M14 30 Q12 8 32 8 Q50 8 50 28 Q54 44 46 52 L18 52 Q10 44 14 30Z" fill="#a87654"/><ellipse cx="32" cy="28" rx="10" ry="12" fill="#e0c0a8"/><path d="M6 64 Q10 46 32 46 Q54 46 58 64Z" fill="#e6e6ee"/><g fill="#2a2a3a"><circle cx="18" cy="56" r="1.6"/><circle cx="26" cy="60" r="1.6"/><circle cx="40" cy="58" r="1.6"/><circle cx="48" cy="56" r="1.6"/></g><rect width="64" height="64" fill="rgba(10,30,95,0.28)"/></g></svg>
<div class="a" style="left:3399px;top:1738.5px;width:64px;height:64px;border-radius:50%;background:#52aee6"></div>
<svg class="a" style="left:3409px;top:1752.5px" width="44" height="36" viewBox="0 0 44 36"><path d="M3 3 H30 V22 H12 L6 28 V22 H3Z" fill="#dfeaf3"/><path d="M32 10 H41 V28 H37 V33 L32 28 H16 V24 H32Z" fill="#a9cfe8"/><rect x="7" y="8" width="14" height="3" fill="#8bc34a"/><rect x="7" y="14" width="10" height="3" fill="#8bc34a"/></svg>
<svg class="a" style="left:3399px;top:1830.4px" width="64" height="64" viewBox="0 0 64 64"><defs><clipPath id="cl14"><circle cx="32" cy="32" r="32"/></clipPath></defs><g clip-path="url(#cl14)"><rect width="64" height="64" fill="#3a3a3c"/><rect x="0" y="0" width="14" height="64" fill="#2a2c2a"/><path d="M14 34 Q10 8 32 8 Q52 8 50 34 L52 56 H12Z" fill="#b8603e"/><ellipse cx="32" cy="30" rx="10" ry="12" fill="#e8b8a4"/><path d="M25 36 Q32 42 39 36" stroke="#c03040" stroke-width="2.5" fill="none"/><path d="M8 64 Q12 50 32 50 Q52 50 56 64Z" fill="#c8303e"/><rect width="64" height="64" fill="rgba(10,30,95,0.28)"/></g></svg>
<div class="a" style="left:3399px;top:1922.3px;width:64px;height:64px;border-radius:50%;background:#c0473b"></div>
<div class="t" style="left:3399px;top:1942.3px;width:64px;text-align:center;font-size:26px;color:#e8c8c0">PB</div>
<div class="a" style="left:3399px;top:2014.2px;width:64px;height:64px;border-radius:50%;background:#3f8a7c"></div>
<svg class="a" style="left:3410px;top:2030.2px" width="42" height="32" viewBox="0 0 42 32"><rect x="1" y="1" width="34" height="24" rx="2" fill="#d8e4e0"/><path d="M38 6 V29 H6" stroke="#d8e4e0" stroke-width="3" fill="none"/><circle cx="11" cy="10" r="4" fill="#3f8a7c"/><path d="M4 22 Q5 15 11 15 Q17 15 18 22Z" fill="#3f8a7c"/><rect x="21" y="8" width="10" height="3" fill="#3f8a7c"/><rect x="21" y="14" width="10" height="3" fill="#3f8a7c"/></svg>
<div class="a" style="left:3399px;top:2106.1px;width:64px;height:64px;border-radius:50%;background:#4caf68"></div>
<div class="t" style="left:3399px;top:2126.1px;width:64px;text-align:center;font-size:26px;color:#d8ecd8">VB</div>
<svg class="a" style="left:3399px;top:2198.0px" width="64" height="64" viewBox="0 0 64 64"><defs><clipPath id="cl18"><circle cx="32" cy="32" r="32"/></clipPath></defs><g clip-path="url(#cl18)"><rect width="64" height="64" fill="#8cc4dc"/><rect x="0" width="16" height="64" fill="#a8a090"/><path d="M14 34 Q12 8 32 8 Q52 8 50 34 L52 60 H12Z" fill="#4a3428"/><ellipse cx="32" cy="30" rx="10" ry="12" fill="#d4a88e"/><path d="M10 64 Q14 52 32 52 Q50 52 54 64Z" fill="#587080"/><rect width="64" height="64" fill="rgba(10,30,95,0.28)"/></g></svg>
<div class="a" style="left:3399px;top:2289.9px;width:64px;height:64px;border-radius:50%;background:#4aa860"></div>
<div class="t" style="left:3399px;top:2309.9px;width:64px;text-align:center;font-size:26px;color:#d8ecd8">P2</div>
<div class="badge" style="left:3448px;top:635px;width:26px;height:26px;line-height:26px;font-size:19px;background:#e5413b;font-weight:normal">1</div>
<div class="badge" style="left:3448px;top:727px;width:26px;height:26px;line-height:26px;font-size:19px;background:#e5413b;font-weight:normal">1</div>
</div>
</body></html>
